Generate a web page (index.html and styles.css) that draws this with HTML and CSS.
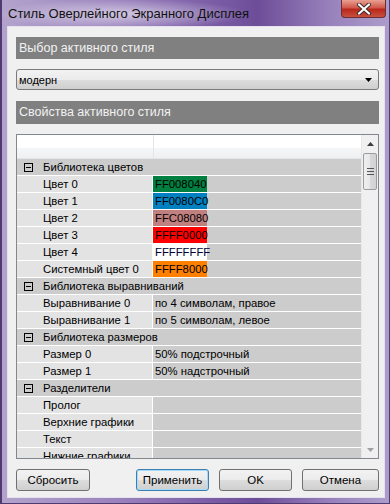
FILE: index.html
```html
<!DOCTYPE html>
<html lang="ru">
<head>
    <meta charset="UTF-8">
    <meta name="viewport" content="width=device-width, initial-scale=1.0">
    <title>Стиль Оверлейного Экранного Дисплея</title>
    <link rel="stylesheet" href="styles.css">
</head>
<body>
    <div class="window">
        <div class="titlebar">
            <span class="title">Стиль Оверлейного Экранного Дисплея</span>
            <div class="close">
                <svg width="16" height="12" viewBox="0 0 16 12">
                    <path d="M3 1.5 L13 10.5 M13 1.5 L3 10.5" stroke="#3a2a2a" stroke-width="4" stroke-linecap="round"/>
                    <path d="M3 1.5 L13 10.5 M13 1.5 L3 10.5" stroke="#ffffff" stroke-width="2.2" stroke-linecap="round"/>
                </svg>
            </div>
        </div>

        <div class="client">
            <div class="section-head">Выбор активного стиля</div>

            <div class="combo">
                <span>модерн</span>
                <svg class="combo-arrow" width="7" height="4" viewBox="0 0 7 4"><path d="M0 0 H7 L3.5 4 Z" fill="#000"/></svg>
            </div>

            <div class="section-head tall">Свойства активного стиля</div>

            <div class="grid">
                <div class="grid-body">
                    <div class="grid-header">
                        <div class="name-col"></div>
                        <div class="value-col"></div>
                    </div>

                    <div class="row cat">
                        <svg class="toggle" width="9" height="9" viewBox="0 0 9 9"><rect x="0.5" y="0.5" width="8" height="8" fill="none" stroke="#000"/><path d="M2 4.5 H7" stroke="#000"/></svg>
                        <span>Библиотека цветов</span>
                    </div>
                    <div class="row"><div class="name">Цвет 0</div><div class="value"><span class="swatch green">FF008040</span></div></div>
                    <div class="row"><div class="name">Цвет 1</div><div class="value"><span class="swatch blue">FF0080C0</span></div></div>
                    <div class="row"><div class="name">Цвет 2</div><div class="value"><span class="swatch rose">FFC08080</span></div></div>
                    <div class="row"><div class="name">Цвет 3</div><div class="value"><span class="swatch red">FFFF0000</span></div></div>
                    <div class="row"><div class="name">Цвет 4</div><div class="value"><span class="swatch white">FFFFFFFF</span></div></div>
                    <div class="row"><div class="name">Системный цвет 0</div><div class="value"><span class="swatch orange">FFFF8000</span></div></div>

                    <div class="row cat">
                        <svg class="toggle" width="9" height="9" viewBox="0 0 9 9"><rect x="0.5" y="0.5" width="8" height="8" fill="none" stroke="#000"/><path d="M2 4.5 H7" stroke="#000"/></svg>
                        <span>Библиотека выравниваний</span>
                    </div>
                    <div class="row"><div class="name">Выравнивание 0</div><div class="value">по 4 символам, правое</div></div>
                    <div class="row"><div class="name">Выравнивание 1</div><div class="value">по 5 символам, левое</div></div>

                    <div class="row cat">
                        <svg class="toggle" width="9" height="9" viewBox="0 0 9 9"><rect x="0.5" y="0.5" width="8" height="8" fill="none" stroke="#000"/><path d="M2 4.5 H7" stroke="#000"/></svg>
                        <span>Библиотека размеров</span>
                    </div>
                    <div class="row"><div class="name">Размер 0</div><div class="value">50% подстрочный</div></div>
                    <div class="row"><div class="name">Размер 1</div><div class="value">50% надстрочный</div></div>

                    <div class="row cat">
                        <svg class="toggle" width="9" height="9" viewBox="0 0 9 9"><rect x="0.5" y="0.5" width="8" height="8" fill="none" stroke="#000"/><path d="M2 4.5 H7" stroke="#000"/></svg>
                        <span>Разделители</span>
                    </div>
                    <div class="row"><div class="name">Пролог</div><div class="value"></div></div>
                    <div class="row"><div class="name">Верхние графики</div><div class="value"></div></div>
                    <div class="row"><div class="name">Текст</div><div class="value"></div></div>
                    <div class="row"><div class="name">Нижние графики</div><div class="value"></div></div>
                </div>

                <div class="scrollbar">
                    <div class="sb-btn">
                        <svg width="7" height="4" viewBox="0 0 7 4"><path d="M0 4 H7 L3.5 0 Z" fill="#3c3c3c"/></svg>
                    </div>
                    <div class="thumb">
                        <span></span><span></span><span></span>
                    </div>
                    <div class="sb-track"></div>
                    <div class="sb-btn">
                        <svg width="7" height="4" viewBox="0 0 7 4"><path d="M0 0 H7 L3.5 4 Z" fill="#a0a0a0"/></svg>
                    </div>
                </div>
            </div>

            <div class="buttons">
                <div class="btn reset">Сбросить</div>
                <div class="btn default">Применить</div>
                <div class="btn">OK</div>
                <div class="btn wide">Отмена</div>
            </div>
        </div>
    </div>
</body>
</html>
```

FILE: styles.css
```css
body {
    margin: 0;
    font-family: 'Liberation Sans', Arial, sans-serif;
    font-size: 11px;
    color: #000;
}
.window {
    width: 390px;
    height: 504px;
    box-sizing: border-box;
    display: flex;
    flex-direction: column;
    padding: 0 4px 5px 5px;
    border-left: 2px solid #4f3a72;
    border-right: 1px solid #4f3a72;
    border-bottom: 1px solid #4f3a72;
    background:
        radial-gradient(ellipse 170px 20px at 120px 14px, rgba(255, 255, 255, 0.55), rgba(255, 255, 255, 0) 75%),
        linear-gradient(to right, #b3a3cc 0%, #9a82bd 30%, #7a5ca5 55%, #6d4d98 66%, #9882bc 85%, #ad9cca 100%);
}
.titlebar {
    height: 26px;
    display: flex;
    align-items: flex-start;
    flex-shrink: 0;
}
.title {
    font-size: 13px;
    padding: 6px 0 0 1px;
    color: #111;
}
.close {
    margin-left: auto;
    margin-right: -1px;
    width: 45px;
    height: 18px;
    box-sizing: border-box;
    border: 1px solid #6a2e33;
    border-top: none;
    border-radius: 0 0 4px 4px;
    background: linear-gradient(#e8a093 0%, #d1594a 45%, #b8271a 55%, #c8503e 100%);
    display: flex;
    align-items: center;
    justify-content: center;
}
.client {
    flex: 1;
    background: #f0f0f0;
    border: 1px solid #e6e1ee;
    padding: 10px 5px 0 8px;
}
.section-head {
    height: 22px;
    line-height: 22px;
    background: #808080;
    color: #f2f2f2;
    font-size: 12.5px;
    padding-left: 3px;
    margin-bottom: 10px;
}
.section-head.tall {
    height: 23px;
    line-height: 23px;
}
.combo {
    height: 21px;
    box-sizing: border-box;
    border: 1px solid #7a7a7a;
    border-radius: 3px;
    background: linear-gradient(#f2f2f2 0%, #ebebeb 50%, #dddddd 51%, #cfcfcf 100%);
    display: flex;
    align-items: center;
    padding: 0 6px 0 2px;
    margin-bottom: 11px;
}
.combo-arrow {
    margin-left: auto;
}
.grid {
    height: 325px;
    box-sizing: border-box;
    border: 1px solid #828790;
    display: flex;
    margin-bottom: 10px;
    background: #fff;
    font-size: 11.3px;
}
.grid-body {
    flex: 1;
    overflow: hidden;
}
.grid-header {
    height: 24px;
    display: flex;
    background: linear-gradient(#ffffff 0%, #ffffff 55%, #f5f6f7 56%, #eff0f1 100%);
    border-bottom: 1px solid #e4e4e4;
    box-sizing: border-box;
}
.grid-header .name-col {
    width: 136px;
    border-right: 1px solid #e3e5e8;
}
.row {
    height: 17px;
    box-sizing: border-box;
    border-bottom: 1px solid #fff;
    display: flex;
    align-items: stretch;
    background: #cccccc;
}
.row.cat {
    align-items: center;
    padding-left: 7px;
}
.row.cat .toggle {
    margin-right: 10px;
}
.row .name {
    width: 136px;
    box-sizing: border-box;
    padding-left: 26px;
    background: #e3e3e3;
    border-right: 1px solid #fff;
    line-height: 16px;
    white-space: nowrap;
}
.row .value {
    flex: 1;
    line-height: 16px;
    padding-left: 2px;
    white-space: nowrap;
}
.swatch {
    display: inline-block;
    width: 54px;
    margin-left: -2px;
    padding-left: 2px;
    box-sizing: border-box;
}
.swatch.green { background: #008040; }
.swatch.blue { background: #0080c0; }
.swatch.rose { background: #c08080; }
.swatch.red { background: #ff0000; }
.swatch.white { background: #ffffff; color: #000033; }
.swatch.orange { background: #ff8000; }
.scrollbar {
    width: 17px;
    display: flex;
    flex-direction: column;
    background: #f0f0f0;
    border-left: 1px solid #e8e8e8;
    box-sizing: border-box;
}
.sb-btn {
    height: 17px;
    display: flex;
    align-items: center;
    justify-content: center;
}
.thumb {
    height: 37px;
    margin: 1px 1px 0 1px;
    box-sizing: border-box;
    border: 1px solid #9c9c9c;
    border-radius: 2px;
    background: linear-gradient(to right, #f0f0f0 0%, #e6e6e6 50%, #d8d8d8 51%, #d2d2d2 100%);
    display: flex;
    flex-direction: column;
    align-items: center;
    justify-content: center;
    gap: 2px;
}
.thumb span {
    width: 7px;
    height: 1px;
    background: #555;
}
.sb-track {
    flex: 1;
}
.buttons {
    display: flex;
    gap: 10px;
}
.btn {
    width: 73px;
    height: 22px;
    box-sizing: border-box;
    border: 1px solid #707070;
    border-radius: 3px;
    background: linear-gradient(#f2f2f2 0%, #ebebeb 50%, #dddddd 51%, #cfcfcf 100%);
    display: flex;
    align-items: center;
    justify-content: center;
    font-size: 11.5px;
}
.btn.reset {
    width: 74px;
    margin-right: auto;
}
.btn.default {
    border-color: #3c7fb1;
    box-shadow: inset 0 0 0 1px #a6dbf8;
}
.btn.wide {
    width: 77px;
}
```
